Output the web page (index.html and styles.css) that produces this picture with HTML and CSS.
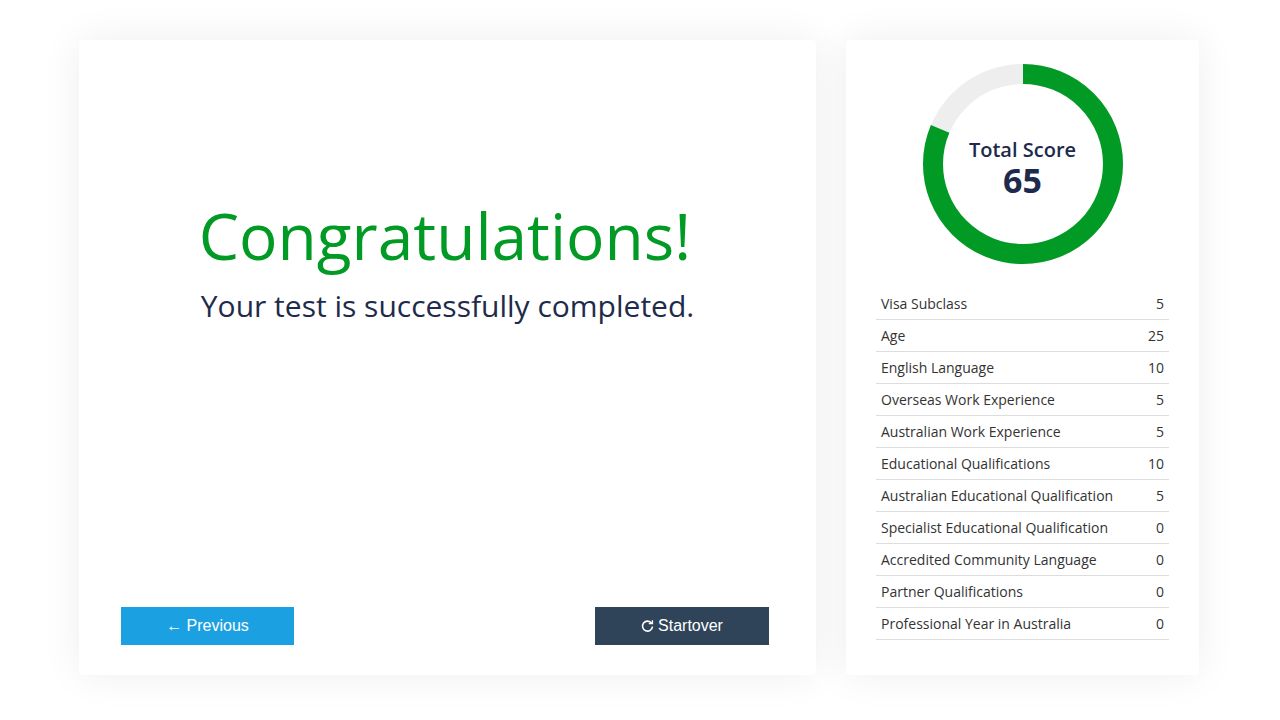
FILE: index.html
```html
<!DOCTYPE html>
<html>
<head>
<meta charset="utf-8">
<link rel="stylesheet" href="styles.css">
</head>
<body>
<div class="page">
  <section class="card main">
    <div class="message">
      <h1 class="title">Congratulations!</h1>
      <p class="subtitle">Your test is successfully completed.</p>
    </div>
    <div class="actions">
      <button class="btn btn-prev">&larr; Previous</button>
      <button class="btn btn-restart"><svg class="icon" width="13" height="13" viewBox="0 0 13 13"><path d="M10.6 3.2 A5 5 0 1 0 11.5 6.5" fill="none" stroke="#fff" stroke-width="1.6"/><path d="M7.8 3.6 L11.4 3.6 L11.4 0.2" fill="none" stroke="#fff" stroke-width="1.4"/></svg> Startover</button>
    </div>
  </section>
  <aside class="card side">
    <div class="donut">
      <svg width="200" height="200" viewBox="0 0 200 200">
        <circle cx="100" cy="100" r="90" fill="none" stroke="#eeeeee" stroke-width="20"/>
        <circle cx="100" cy="100" r="90" fill="none" stroke="#009a24" stroke-width="20"
          stroke-dasharray="459.46 565.49" transform="rotate(-90 100 100)"/>
      </svg>
      <div class="donut-label">
        <div class="donut-title">Total Score</div>
        <div class="donut-value">65</div>
      </div>
    </div>
    <table class="scores">
      <tr><td>Visa Subclass</td><td>5</td></tr>
      <tr><td>Age</td><td>25</td></tr>
      <tr><td>English Language</td><td>10</td></tr>
      <tr><td>Overseas Work Experience</td><td>5</td></tr>
      <tr><td>Australian Work Experience</td><td>5</td></tr>
      <tr><td>Educational Qualifications</td><td>10</td></tr>
      <tr><td>Australian Educational Qualification</td><td>5</td></tr>
      <tr><td>Specialist Educational Qualification</td><td>0</td></tr>
      <tr><td>Accredited Community Language</td><td>0</td></tr>
      <tr><td>Partner Qualifications</td><td>0</td></tr>
      <tr><td>Professional Year in Australia</td><td>0</td></tr>
    </table>
  </aside>
</div>
</body>
</html>
```
FILE: styles.css
```css
html, body {
  margin: 0;
  padding: 0;
  background: #ffffff;
  font-family: "Open Sans", "Liberation Sans", sans-serif;
}
.page {
  display: flex;
  gap: 30px;
  padding: 40px 81px 45px 79px;
  box-sizing: border-box;
  height: 720px;
}
.card {
  background: #ffffff;
  border-radius: 4px;
  box-shadow: 0 0 40px rgba(0, 0, 0, 0.07);
  box-sizing: border-box;
}
.main {
  width: 737px;
  height: 635px;
  display: flex;
  flex-direction: column;
  padding: 0 47px 30px 42px;
}
.message {
  flex: 1;
  display: flex;
  flex-direction: column;
  align-items: center;
  padding-top: 158px;
}
.title {
  margin: 0;
  font-weight: 400;
  font-size: 64px;
  line-height: 76px;
  color: #009a24;
}
.subtitle {
  margin: 12px 0 0;
  font-size: 30px;
  line-height: 40px;
  color: #1e2b4a;
  padding-left: 5px;
}
.actions {
  display: flex;
  justify-content: space-between;
}
.btn {
  border: none;
  color: #ffffff;
  font-family: "Liberation Sans", Arial, sans-serif;
  font-size: 16px;
  height: 38px;
  padding: 0;
  cursor: pointer;
  display: flex;
  align-items: center;
  justify-content: center;
  gap: 4px;
}
.btn-prev {
  width: 173px;
  background: #1ba1e2;
}
.btn-restart {
  width: 174px;
  background: #2f4459;
}
.icon {
  display: block;
}
.side {
  width: 353px;
  height: 635px;
  padding: 24px 30px 0;
}
.donut {
  position: relative;
  width: 200px;
  height: 200px;
  margin: 0 auto;
}
.donut svg {
  display: block;
}
.donut-label {
  position: absolute;
  inset: 0;
  display: flex;
  flex-direction: column;
  align-items: center;
  justify-content: center;
  color: #1d2a4d;
  padding-top: 8px;
  box-sizing: border-box;
}
.donut-title {
  font-size: 20px;
  font-weight: 600;
  line-height: 24px;
}
.donut-value {
  font-size: 34px;
  font-weight: 700;
  line-height: 36px;
}
.scores {
  width: 100%;
  border-collapse: collapse;
  margin-top: 24px;
  font-size: 14px;
  color: #333333;
}
.scores td {
  height: 31px;
  padding: 0 5px;
  border-bottom: 1px solid #dddddd;
  line-height: 20px;
}
.scores td:last-child {
  text-align: right;
}
```
